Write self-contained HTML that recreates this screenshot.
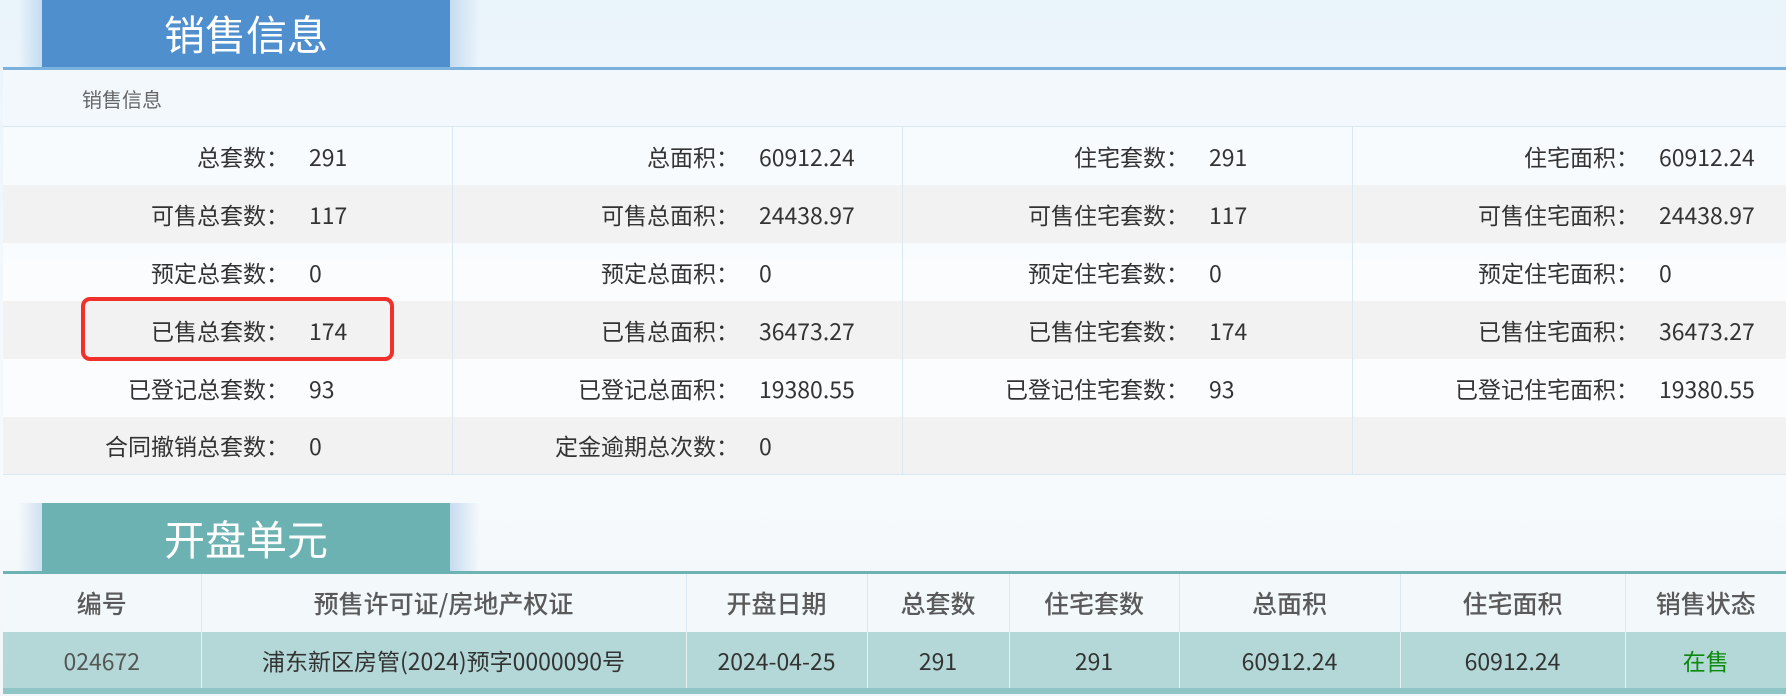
<!DOCTYPE html>
<html><head><meta charset="utf-8">
<style>
*{margin:0;padding:0;box-sizing:border-box}
body{width:1786px;height:696px;overflow:hidden;font-family:"Noto Sans CJK SC","Liberation Sans",sans-serif;background:linear-gradient(180deg,#eaf4fb 0%,#f3f8fc 40%,#f7fafc 70%,#f2f6f9 100%);position:relative}
.tab{position:absolute;left:42px;width:408px;color:#fff;text-align:center;font-size:41px;font-weight:400}
.fade{position:absolute;width:30px;}
.sub{position:absolute;left:3px;right:0;top:70px;height:57px;background:#f2f8fc;border-bottom:1px solid #d8e9f5;font-size:20px;color:#666;padding-left:79px;line-height:57px}
.grid{position:absolute;left:3px;right:0;top:127px}
.row{height:58px;display:flex}
.row.g{background:#f2f2f2}
.row.w{background:rgba(255,255,255,0.55)}
.cell{width:450px;display:flex;align-items:center;border-right:1px solid #d8e9f5;font-size:23px;color:#333;line-height:1}
.cell:last-child{border-right:none;flex:1}
.lab{width:286px;text-align:right;white-space:nowrap}
.val{padding-left:20px}
table{position:absolute;left:3px;top:574px;width:1783px;border-collapse:collapse;text-align:center}
th{height:58px;background:#f3f8fb;font-size:25px;color:#5a5a5a;font-weight:500;border-right:1px solid #d8e9f5}
td{height:59px;background:#b4d8d8;font-size:23px;color:#333;border-right:1px solid #e6f2f2;border-bottom:6px solid #8fc5c5}
</style></head><body>
<div class="fade" style="left:18px;top:0;height:68px;background:linear-gradient(90deg,rgba(180,210,240,0),#b9d5ef)"></div>
<div class="fade" style="left:450px;top:0;height:68px;background:linear-gradient(90deg,#c6dcf0,rgba(200,220,240,0))"></div>
<div class="tab" style="top:0;height:68px;line-height:64px;background:#4f8fce">销售信息</div>
<div style="position:absolute;left:3px;right:0;top:67px;height:3px;background:#7ab2dd"></div>
<div class="sub">销售信息</div>
<div class="grid">
<div class="row w"><div class="cell"><span class="lab">总套数：</span><span class="val">291</span></div><div class="cell"><span class="lab">总面积：</span><span class="val">60912.24</span></div><div class="cell"><span class="lab">住宅套数：</span><span class="val">291</span></div><div class="cell"><span class="lab">住宅面积：</span><span class="val">60912.24</span></div></div>
<div class="row g"><div class="cell"><span class="lab">可售总套数：</span><span class="val">117</span></div><div class="cell"><span class="lab">可售总面积：</span><span class="val">24438.97</span></div><div class="cell"><span class="lab">可售住宅套数：</span><span class="val">117</span></div><div class="cell"><span class="lab">可售住宅面积：</span><span class="val">24438.97</span></div></div>
<div class="row w"><div class="cell"><span class="lab">预定总套数：</span><span class="val">0</span></div><div class="cell"><span class="lab">预定总面积：</span><span class="val">0</span></div><div class="cell"><span class="lab">预定住宅套数：</span><span class="val">0</span></div><div class="cell"><span class="lab">预定住宅面积：</span><span class="val">0</span></div></div>
<div class="row g"><div class="cell"><span class="lab">已售总套数：</span><span class="val">174</span></div><div class="cell"><span class="lab">已售总面积：</span><span class="val">36473.27</span></div><div class="cell"><span class="lab">已售住宅套数：</span><span class="val">174</span></div><div class="cell"><span class="lab">已售住宅面积：</span><span class="val">36473.27</span></div></div>
<div class="row w"><div class="cell"><span class="lab">已登记总套数：</span><span class="val">93</span></div><div class="cell"><span class="lab">已登记总面积：</span><span class="val">19380.55</span></div><div class="cell"><span class="lab">已登记住宅套数：</span><span class="val">93</span></div><div class="cell"><span class="lab">已登记住宅面积：</span><span class="val">19380.55</span></div></div>
<div class="row g" style="border-bottom:1px solid #d8e9f5"><div class="cell"><span class="lab">合同撤销总套数：</span><span class="val">0</span></div><div class="cell"><span class="lab">定金逾期总次数：</span><span class="val">0</span></div><div class="cell"></div><div class="cell"></div></div>
</div>
<div style="position:absolute;left:81px;top:297px;width:313px;height:64px;border:4px solid #f0302a;border-radius:9px"></div>
<div class="fade" style="left:18px;top:503px;height:68px;background:linear-gradient(90deg,rgba(200,220,240,0),#c5dbef)"></div>
<div class="fade" style="left:450px;top:503px;height:68px;background:linear-gradient(90deg,#c6dcf0,rgba(200,220,240,0))"></div>
<div class="tab" style="top:503px;height:68px;line-height:68px;background:#6db2b2">开盘单元</div>
<div style="position:absolute;left:3px;right:0;top:571px;height:3px;background:#6db3b3"></div>
<table>
<tr><th style="width:198px">编号</th><th style="width:485px">预售许可证/房地产权证</th><th style="width:181px">开盘日期</th><th style="width:142px">总套数</th><th style="width:170px">住宅套数</th><th style="width:221px">总面积</th><th style="width:225px">住宅面积</th><th style="border-right:none">销售状态</th></tr>
<tr><td style="color:#555">024672</td><td>浦东新区房管(2024)预字0000090号</td><td>2024-04-25</td><td>291</td><td>291</td><td>60912.24</td><td>60912.24</td><td style="color:#0a8a0a;border-right:none">在售</td></tr>
</table>
</body></html>
